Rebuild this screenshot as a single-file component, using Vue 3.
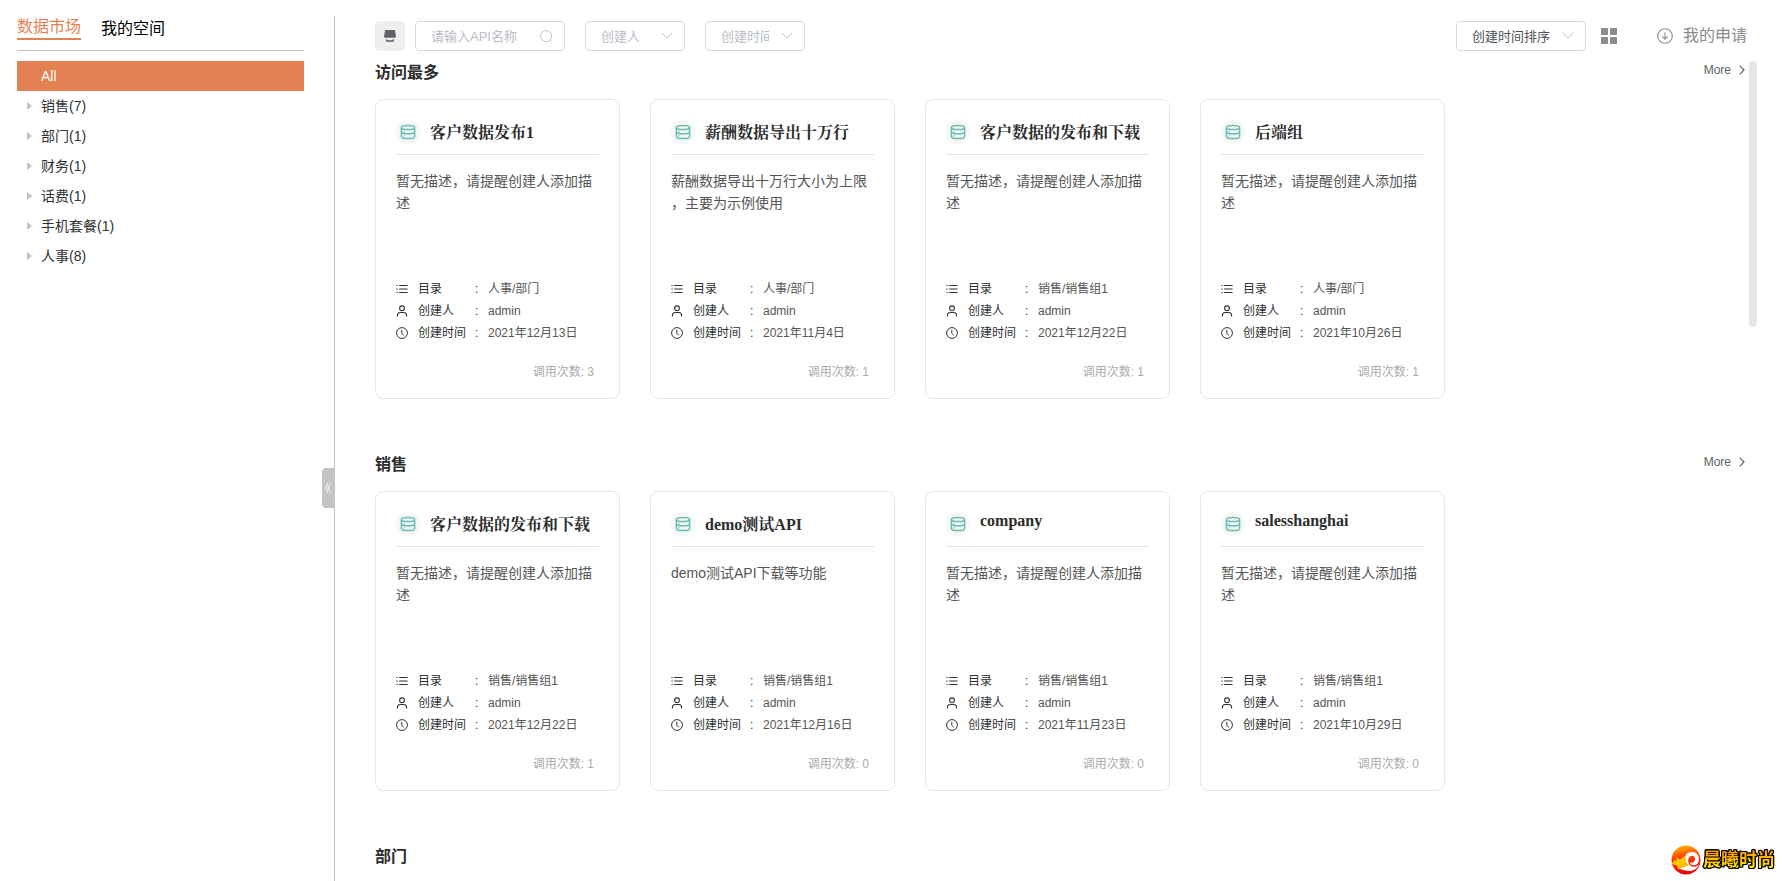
<script setup>
import { ref } from 'vue'

const keyword = ref('')
const tree = ['销售(7)', '部门(1)', '财务(1)', '话费(1)', '手机套餐(1)', '人事(8)']
const noDesc = '暂无描述，请提醒创建人添加描述'

const sections = [
  {
    title: '访问最多',
    cards: [
      { name: '客户数据发布1', desc: noDesc, dir: '人事/部门', date: '2021年12月13日', calls: 3 },
      { name: '薪酬数据导出十万行', desc: '薪酬数据导出十万行大小为上限，主要为示例使用', dir: '人事/部门', date: '2021年11月4日', calls: 1 },
      { name: '客户数据的发布和下载', desc: noDesc, dir: '销售/销售组1', date: '2021年12月22日', calls: 1 },
      { name: '后端组', desc: noDesc, dir: '人事/部门', date: '2021年10月26日', calls: 1 },
    ],
  },
  {
    title: '销售',
    cards: [
      { name: '客户数据的发布和下载', desc: noDesc, dir: '销售/销售组1', date: '2021年12月22日', calls: 1 },
      { name: 'demo测试API', desc: 'demo测试API下载等功能', dir: '销售/销售组1', date: '2021年12月16日', calls: 0 },
      { name: 'company', desc: noDesc, dir: '销售/销售组1', date: '2021年11月23日', calls: 0 },
      { name: 'salesshanghai', desc: noDesc, dir: '销售/销售组1', date: '2021年10月29日', calls: 0 },
    ],
  },
  { title: '部门', cards: [] },
]
</script>

<template>
  <div class="page">
    <aside class="sidebar">
      <nav class="tabs">
        <a href="#market" class="tab active">数据市场</a>
        <a href="#space" class="tab">我的空间</a>
      </nav>
      <ul class="tree">
        <li><button type="button" class="node selected">All</button></li>
        <li v-for="item in tree" :key="item">
          <button type="button" class="node">
            <svg class="caret" viewBox="0 0 5 8" width="5" height="8"><path d="M0 0L5 4L0 8Z" fill="#c0c4cc" /></svg>
            {{ item }}
          </button>
        </li>
      </ul>
      <button type="button" class="collapse" aria-label="收起">
        <svg viewBox="0 0 6 10" width="6" height="10" fill="none" stroke="#fff" stroke-width="0.9"><path d="M3 0.3L0.7 5L3 9.7M5.5 0.3L3.2 5L5.5 9.7" /></svg>
      </button>
    </aside>

    <main class="main">
      <header class="toolbar">
        <button type="button" class="square" aria-label="筛选">
          <svg viewBox="0 0 12 12" width="12" height="12" fill="#5f6168">
            <path d="M1.2 0H10.8L12 6.5Q12 7.6 11 7.8H1Q0 7.6 0 6.5Z" />
            <path d="M2 9.2H3.3V10.2H8.7V9.2H10V11Q10 11.7 9.3 11.7H2.7Q2 11.7 2 11Z" />
          </svg>
        </button>
        <label class="field search">
          <input v-model="keyword" type="text" placeholder="请输入API名称" aria-label="API名称" />
          <svg viewBox="0 0 13 13" width="13" height="13" fill="none" stroke="#c0c4cc"><circle cx="6.2" cy="6.2" r="5.6" /><path d="M10 10.4L12 12.4" /></svg>
        </label>
        <label class="field pick">
          <select aria-label="创建人"><option>创建人</option></select>
          <svg viewBox="0 0 12 7" width="12" height="7" fill="none" stroke="#c0c4cc"><path d="M0.7 0.7L6 6L11.3 0.7" /></svg>
        </label>
        <label class="field pick">
          <select aria-label="创建时间"><option>创建时间</option></select>
          <svg viewBox="0 0 12 7" width="12" height="7" fill="none" stroke="#c0c4cc"><path d="M0.7 0.7L6 6L11.3 0.7" /></svg>
        </label>
        <label class="field pick sort">
          <select aria-label="排序"><option>创建时间排序</option></select>
          <svg viewBox="0 0 12 7" width="12" height="7" fill="none" stroke="#c0c4cc"><path d="M0.7 0.7L6 6L11.3 0.7" /></svg>
        </label>
        <button type="button" class="grid-toggle" aria-label="卡片视图">
          <svg viewBox="0 0 16 16" width="16" height="16" fill="#8c8c8c"><rect width="7" height="7" rx="0.6" /><rect x="9" width="7" height="7" rx="0.6" /><rect y="9" width="7" height="7" rx="0.6" /><rect x="9" y="9" width="7" height="7" rx="0.6" /></svg>
        </button>
        <a href="#apply" class="apply">
          <svg viewBox="0 0 16 16" width="16" height="16" fill="none" stroke="#8c8c8c" stroke-width="1.1"><circle cx="8" cy="8" r="7.3" /><path d="M8 4.2V11.2M5.2 8.4L8 11.2L10.8 8.4" /></svg>
          我的申请
        </a>
      </header>

      <div class="scroller">
        <section v-for="section in sections" :key="section.title" class="section">
          <div class="section-head">
            <h2>{{ section.title }}</h2>
            <a href="#more" class="more">More
              <svg viewBox="0 0 6 10" width="6" height="10" fill="none" stroke="#606266" stroke-width="1.2"><path d="M0.7 0.7L5 5L0.7 9.3" /></svg>
            </a>
          </div>
          <div class="cards">
            <article v-for="card in section.cards" :key="card.name" class="card">
              <div class="card-head">
                <span class="badge">
                  <svg viewBox="0 0 16 16" width="16" height="16" fill="none" stroke="#66bdb2" stroke-width="1.5">
                    <path d="M1.4 3.4C1.4 2 4.2 1.4 8 1.4S14.6 2 14.6 3.4S11.8 5.6 8 5.6S1.4 4.8 1.4 3.4Z" />
                    <path d="M1.4 3.4V12.4C1.4 13.8 4.2 14.6 8 14.6S14.6 13.8 14.6 12.4V3.4" />
                    <path d="M1.4 8.2C2.4 9.4 4.8 9.9 8 9.9S13.6 9.4 14.6 8.2" />
                    <path d="M3.4 8H5M3.4 12H5" stroke-width="1" />
                  </svg>
                </span>
                <h3>{{ card.name }}</h3>
              </div>
              <p class="desc">{{ card.desc }}</p>
              <dl class="meta">
                <div class="row">
                  <dt>
                    <svg viewBox="0 0 12 12" width="12" height="12" fill="none" stroke="#303133"><path d="M3.2 2.5H11.6M3.2 6H11.6M3.2 9.5H11.6M0.4 2.5H1.7M0.4 6H1.7M0.4 9.5H1.7" /></svg>
                    <span class="label">目录</span><span class="colon">:</span>
                  </dt>
                  <dd>{{ card.dir }}</dd>
                </div>
                <div class="row">
                  <dt>
                    <svg viewBox="0 0 12 12" width="12" height="12" fill="none" stroke="#303133" stroke-width="1.1"><circle cx="6" cy="3.3" r="2.4" /><path d="M1.4 11.6V10.6C1.4 8.7 2.8 7.5 4.4 7.5H7.6C9.2 7.5 10.6 8.7 10.6 10.6V11.6" /></svg>
                    <span class="label">创建人</span><span class="colon">:</span>
                  </dt>
                  <dd>admin</dd>
                </div>
                <div class="row">
                  <dt>
                    <svg viewBox="0 0 12 12" width="12" height="12" fill="none" stroke="#303133"><circle cx="6" cy="6" r="5.4" /><path d="M5.8 2.8V6.2L7.8 8.4" /></svg>
                    <span class="label">创建时间</span><span class="colon">:</span>
                  </dt>
                  <dd>{{ card.date }}</dd>
                </div>
              </dl>
              <p class="calls">调用次数: {{ card.calls }}</p>
            </article>
          </div>
        </section>
      </div>
      <div class="thumb"></div>
    </main>

    <div class="watermark">
      <svg viewBox="0 0 30 30" width="30" height="30">
        <defs>
          <linearGradient id="ball" x1="0.4" y1="0" x2="0.6" y2="1">
            <stop offset="0" stop-color="#ffb400" />
            <stop offset="0.4" stop-color="#ff3c00" />
            <stop offset="1" stop-color="#e80010" />
          </linearGradient>
          <linearGradient id="bird" x1="0" y1="0" x2="1" y2="1">
            <stop offset="0" stop-color="#ffe000" />
            <stop offset="1" stop-color="#ffb000" />
          </linearGradient>
        </defs>
        <circle cx="15" cy="15" r="14.5" fill="url(#ball)" />
        <path d="M14 12C15 8 20 6 24 7.500C28 9 29 14 27 18C25 21 20 21 18.500 17.500C21 18.500 24 17 24 14C24 11 21 10 19 11.500C16 14 17 19 20 21C23 22.500 26 21.500 28 19.500C26 25 20 27 15 25.500C11 25 9 24 8 23L15 19Z" fill="#fff" />
        <path d="M3 15L6 16L5.500 12.500L9 14.500L14.500 10.500L14.500 16L17.500 20C14 22.500 10 22 7.500 24.500L6 20.500L1 19Z" fill="url(#bird)" />
      </svg>
      <span class="brand">晨曦时尚</span>
    </div>
  </div>
</template>

<style>
body { margin: 0; }
</style>

<style scoped>
.page {
  position: relative;
  display: flex;
  height: 100vh;
  overflow: hidden;
  background: #fff;
  color: #303133;
  font-family: "Liberation Sans", "Noto Sans CJK SC", sans-serif;
  font-size: 14px;
}
button, input, select { font: inherit; color: inherit; margin: 0; }
button { padding: 0; border: 0; background: none; cursor: pointer; }
a { color: inherit; text-decoration: none; }
svg { flex: none; display: block; }
h2, h3, p, ul, dl, dd { margin: 0; padding: 0; }

.sidebar {
  position: relative;
  box-sizing: border-box;
  flex: none;
  width: 335px;
  margin-top: 16px;
  padding: 0 30px 0 17px;
  border-right: 1px solid #c4c4c4;
}
.tabs {
  display: flex;
  align-items: flex-end;
  gap: 20px;
  padding-bottom: 10px;
  margin-bottom: 10px;
  border-bottom: 1px solid #c4c4c4;
  font-size: 16px;
  line-height: 22px;
  color: #000;
}
.tab.active { color: #e38152; border-bottom: 2px solid #e38152; }
.tree { list-style: none; }
.node {
  display: flex;
  align-items: center;
  gap: 9px;
  width: 100%;
  height: 30px;
  padding-left: 10px;
  line-height: 20px;
  text-align: left;
}
.node.selected { padding-left: 24px; background: #e38152; color: #fff; }
.collapse {
  position: absolute;
  right: 0;
  top: 452px;
  display: flex;
  align-items: center;
  justify-content: center;
  width: 12px;
  height: 40px;
  border-radius: 4px 0 0 4px;
  background: #c4c4c4;
}

.main {
  position: relative;
  flex: 1;
  min-width: 0;
  display: flex;
  flex-direction: column;
  padding: 21px 35px 0 40px;
}
.toolbar { display: flex; align-items: center; height: 30px; margin-bottom: 10px; }
.square {
  display: flex;
  align-items: center;
  justify-content: center;
  width: 30px;
  height: 30px;
  margin-right: 10px;
  border-radius: 4px;
  background: #efefef;
}
.field {
  position: relative;
  box-sizing: border-box;
  width: 100px;
  height: 30px;
  margin-right: 20px;
  border: 1px solid #d4d9e3;
  border-radius: 4px;
  color: #b8bcc5;
  font-size: 13px;
}
.field.search { width: 150px; }
.field.sort { width: 130px; margin: 0 15px 0 auto; color: #505257; }
.field input, .field select {
  box-sizing: border-box;
  display: block;
  width: 100%;
  height: 28px;
  padding: 0 35px 0 15px;
  border: 0;
  outline: 0;
  background: transparent;
  appearance: none;
}
.field input::placeholder { color: #b8bcc5; opacity: 1; }
.field svg { position: absolute; right: 11px; top: 10px; pointer-events: none; }
.field.search svg { top: 8px; }
.grid-toggle { margin-right: 40px; }
.apply {
  display: flex;
  align-items: center;
  gap: 10px;
  color: #8c8c8c;
  font-size: 16px;
  line-height: 22px;
}

.scroller { flex: 1; min-height: 0; overflow: hidden; }
.section { margin-bottom: 54px; }
.section-head {
  display: flex;
  align-items: flex-start;
  justify-content: space-between;
  margin-bottom: 14px;
}
.section-head h2 { font-size: 16px; line-height: 24px; color: #2c2c2c; }
.more {
  display: flex;
  align-items: center;
  gap: 8px;
  margin-right: 2px;
  font-size: 12px;
  line-height: 18px;
  color: #606266;
}
.cards { display: flex; flex-wrap: wrap; gap: 30px; }
.card {
  box-sizing: border-box;
  width: 245px;
  min-height: 300px;
  padding: 20px 20px 14px;
  border: 1px solid #e4e7ea;
  border-radius: 8px;
}
.card-head {
  display: flex;
  align-items: flex-start;
  gap: 10px;
  height: 34px;
  margin-bottom: 15px;
  border-bottom: 1px solid #e0e4e9;
}
.badge {
  flex: none;
  display: flex;
  align-items: center;
  justify-content: center;
  width: 24px;
  height: 24px;
  border-radius: 50%;
  background: #f6f6f6;
}
.card-head h3 {
  font-family: "Liberation Serif", "Noto Serif CJK SC", "Noto Sans CJK SC", serif;
  font-size: 16px;
  line-height: normal;
  color: #2c2c2c;
  white-space: nowrap;
}
.desc { height: 108px; line-height: 22px; color: #555; line-break: anywhere; }
.meta { font-size: 12px; line-height: 22px; }
.row { display: flex; }
.row dt { display: flex; align-items: center; }
.label { width: 56px; margin-left: 10px; }
.colon { width: 14px; text-indent: 1px; }
.row dd { color: #555; }
.calls {
  margin-top: 17px;
  padding-right: 5px;
  text-align: right;
  font-size: 12px;
  line-height: 22px;
  color: #aaa;
}
.thumb {
  position: absolute;
  right: 25px;
  top: 61px;
  width: 8px;
  height: 266px;
  border-radius: 4px;
  background: #e6e6e6;
}

.watermark {
  position: absolute;
  right: 7px;
  bottom: 6px;
  display: flex;
  align-items: center;
  gap: 2px;
}
.brand {
  font-size: 18px;
  font-weight: 700;
  line-height: 30px;
  color: transparent;
  background: linear-gradient(#ff9a00 25%, #ffe600 75%);
  -webkit-background-clip: text;
  background-clip: text;
  filter: drop-shadow(1px 0 0 #000) drop-shadow(-1px 0 0 #000) drop-shadow(0 1px 0 #000) drop-shadow(0 -1px 0 #000);
}
</style>
